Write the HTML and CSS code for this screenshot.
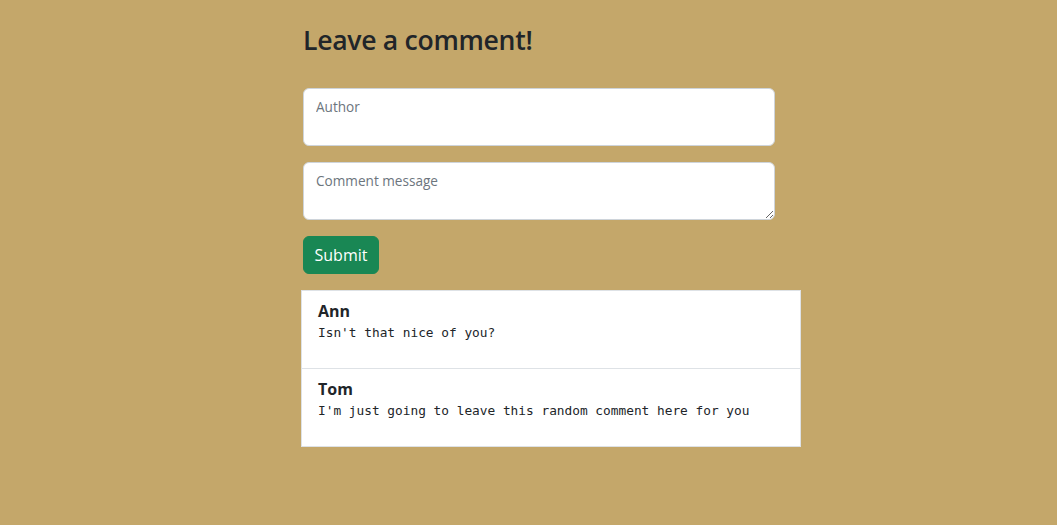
FILE: index.html
```html
<!DOCTYPE html>
<html lang="en">
<head>
<meta charset="utf-8">
<title>Leave a comment</title>
<link rel="stylesheet" href="styles.css">
</head>
<body>
<main class="page">
  <section class="form-wrap">
    <h3 class="title">Leave a comment!</h3>
    <form class="form">
      <input class="field" type="text" placeholder="Author">
      <textarea class="field area" placeholder="Comment message"></textarea>
      <button class="btn" type="button">Submit</button>
    </form>
  </section>
  <ul class="comments">
    <li class="comment">
      <div class="name">Ann</div>
      <div class="msg">Isn't that nice of you?</div>
    </li>
    <li class="comment">
      <div class="name">Tom</div>
      <div class="msg">I'm just going to leave this random comment here for you</div>
    </li>
  </ul>
</main>
</body>
</html>
```

FILE: styles.css
```css
* { box-sizing: border-box; }
html, body {
  margin: 0;
  background: #c4a76a;
  font-family: "Open Sans", "Noto Sans", Arial, sans-serif;
  color: #212529;
}
.page {
  width: 500px;
  margin-left: calc(50% - 227.5px);
  padding-top: 24px;
  display: flex;
  flex-direction: column;
  align-items: flex-start;
}
.form-wrap {
  width: 472px;
  margin-left: 2px;
}
.title {
  margin: 0 0 31px;
  font-size: 26.6px;
  font-weight: 600;
  line-height: 33px;
  letter-spacing: -0.3px;
}
.form {
  display: flex;
  flex-direction: column;
  align-items: flex-start;
  gap: 16px;
}
.field {
  width: 472px;
  height: 58px;
  border: 1px solid #ced4da;
  border-radius: 6px;
  background: #fff;
  padding: 8px 12px;
  font-family: inherit;
  font-size: 13.6px;
  color: #212529;
  margin: 0;
  display: block;
}
input.field { padding-bottom: 29px; }
.field::placeholder { color: #6c757d; }
.area { resize: vertical; }
.btn {
  height: 38px;
  padding: 0 10.5px;
  background: #198754;
  color: #fff;
  border: 1px solid #198754;
  border-radius: 6px;
  font-family: inherit;
  font-size: 16px;
}
.comments {
  list-style: none;
  margin: 16px 0 0;
  padding: 0;
  width: 500px;
  background: #fff;
  border: 1px solid #dee2e6;
}
.comment {
  height: 77px;
  padding: 10px 16px;
}
.comment + .comment {
  border-top: 1px solid #dee2e6;
  height: 78px;
}
.name {
  font-weight: 700;
  font-size: 16px;
  line-height: 20px;
}
.msg {
  font-family: "DejaVu Sans Mono", "Liberation Mono", monospace;
  font-size: 12.8px;
  line-height: 20px;
  margin-top: 2px;
}
```
